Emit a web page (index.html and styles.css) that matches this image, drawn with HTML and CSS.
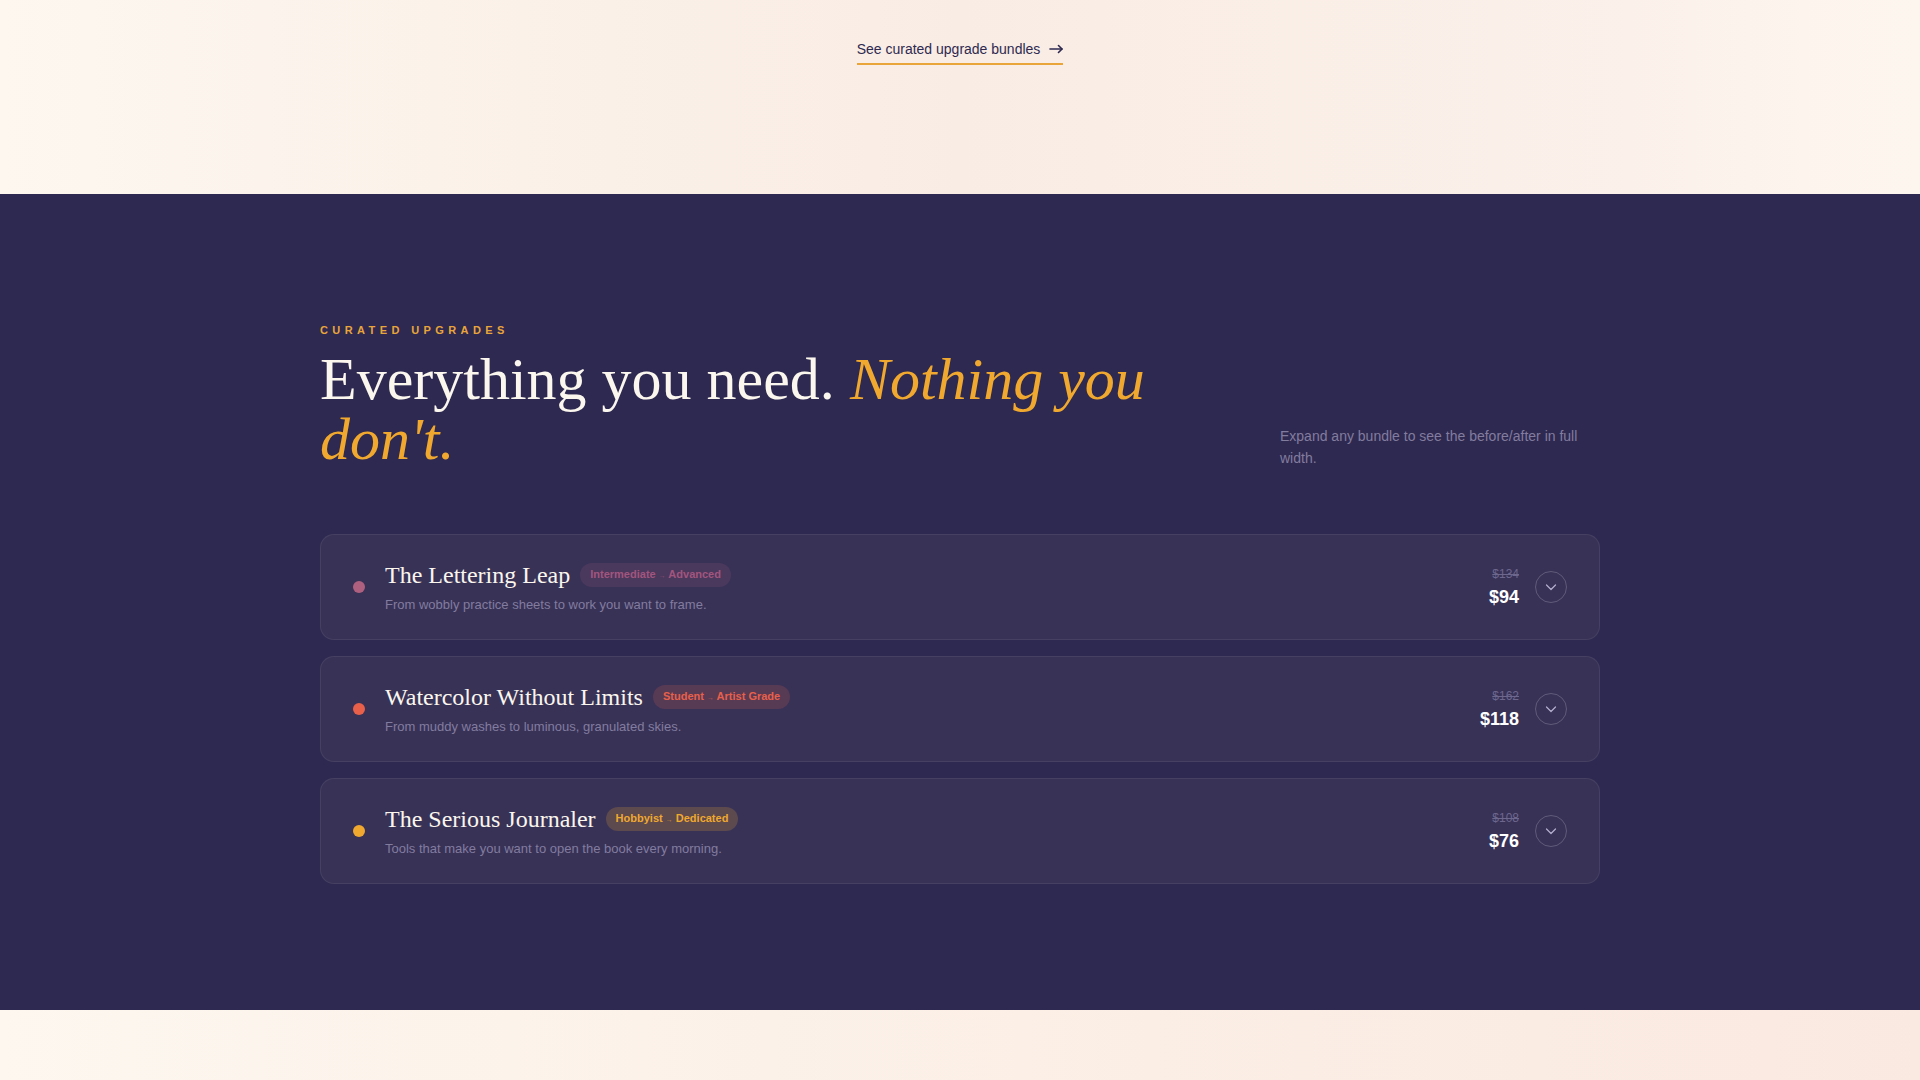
FILE: index.html
```html
<!DOCTYPE html>
<html lang="en">
<head>
    <meta charset="UTF-8">
    <meta name="viewport" content="width=device-width, initial-scale=1.0">
    <title>Curated Upgrades</title>
    <link rel="stylesheet" href="styles.css">
</head>
<body>
    <section class="hero-end">
        <a href="#bundles" class="bundle-link">
            <span>See curated upgrade bundles</span>
            <svg width="14" height="14" viewBox="0 0 14 14" fill="none" stroke="currentColor" stroke-width="1.6" stroke-linecap="round" stroke-linejoin="round">
                <path d="M1 7h12"/>
                <path d="M9.5 3.5L13 7l-3.5 3.5"/>
            </svg>
        </a>
    </section>

    <section class="bundles" id="bundles">
        <div class="container">
            <div class="bundles-head">
                <div class="head-left">
                    <p class="eyebrow">CURATED UPGRADES</p>
                    <h1>Everything you need. <em>Nothing you don't.</em></h1>
                </div>
                <p class="head-note">Expand any bundle to see the before/after in full width.</p>
            </div>

            <div class="bundle-list">
                <div class="bundle rose">
                    <span class="dot"></span>
                    <div class="bundle-info">
                        <div class="bundle-title">
                            <h3>The Lettering Leap</h3>
                            <span class="badge">Intermediate <span class="arrow">→</span> Advanced</span>
                        </div>
                        <p>From wobbly practice sheets to work you want to frame.</p>
                    </div>
                    <div class="price">
                        <span class="old">$134</span>
                        <span class="new">$94</span>
                    </div>
                    <button class="toggle" aria-label="Expand">
                        <svg width="12" height="12" viewBox="0 0 12 12" fill="none" stroke="currentColor" stroke-width="1.2" stroke-linecap="round" stroke-linejoin="round"><path d="M1.5 4l4.5 4.5L10.5 4"/></svg>
                    </button>
                </div>

                <div class="bundle coral">
                    <span class="dot"></span>
                    <div class="bundle-info">
                        <div class="bundle-title">
                            <h3>Watercolor Without Limits</h3>
                            <span class="badge">Student <span class="arrow">→</span> Artist Grade</span>
                        </div>
                        <p>From muddy washes to luminous, granulated skies.</p>
                    </div>
                    <div class="price">
                        <span class="old">$162</span>
                        <span class="new">$118</span>
                    </div>
                    <button class="toggle" aria-label="Expand">
                        <svg width="12" height="12" viewBox="0 0 12 12" fill="none" stroke="currentColor" stroke-width="1.2" stroke-linecap="round" stroke-linejoin="round"><path d="M1.5 4l4.5 4.5L10.5 4"/></svg>
                    </button>
                </div>

                <div class="bundle amber">
                    <span class="dot"></span>
                    <div class="bundle-info">
                        <div class="bundle-title">
                            <h3>The Serious Journaler</h3>
                            <span class="badge">Hobbyist <span class="arrow">→</span> Dedicated</span>
                        </div>
                        <p>Tools that make you want to open the book every morning.</p>
                    </div>
                    <div class="price">
                        <span class="old">$108</span>
                        <span class="new">$76</span>
                    </div>
                    <button class="toggle" aria-label="Expand">
                        <svg width="12" height="12" viewBox="0 0 12 12" fill="none" stroke="currentColor" stroke-width="1.2" stroke-linecap="round" stroke-linejoin="round"><path d="M1.5 4l4.5 4.5L10.5 4"/></svg>
                    </button>
                </div>
            </div>
        </div>
    </section>

    <section class="after"></section>
</body>
</html>
```

FILE: styles.css
```css
body {
    font-family: "Liberation Sans", Arial, sans-serif;
    margin: 0;
    padding: 0;
    background-color: #fcf3eb;
}

.hero-end {
    height: 194px;
    box-sizing: border-box;
    padding-top: 39px;
    display: flex;
    justify-content: center;
    align-items: flex-start;
    background: linear-gradient(90deg, #fdf7ef 0%, #f9ece4 50%, #fbf1ea 85%, #fdf6ef 100%);
}

.bundle-link {
    display: flex;
    align-items: center;
    gap: 9px;
    color: #2e2950;
    text-decoration: none;
    font-size: 14px;
    line-height: 20px;
    padding-bottom: 4px;
    border-bottom: 2px solid #e9a53a;
}

.bundles {
    background-color: #2e2950;
    padding: 128px 0 126px;
}

.container {
    width: 1280px;
    margin: 0 auto;
}

.bundles-head {
    display: flex;
    justify-content: space-between;
    align-items: flex-end;
    margin-bottom: 65px;
}

.head-left {
    max-width: 900px;
}

.eyebrow {
    margin: 0 0 11px;
    color: #e9a53a;
    font-size: 11px;
    line-height: 16px;
    font-weight: bold;
    letter-spacing: 4.4px;
}

h1 {
    margin: 0;
    font-family: "Liberation Serif", "Times New Roman", serif;
    font-weight: normal;
    font-size: 60px;
    line-height: 60px;
    color: #fbf6ee;
}

h1 em {
    color: #f0a82e;
}

.head-note {
    width: 320px;
    margin: 0;
    font-size: 14px;
    line-height: 22px;
    color: #827c9f;
}

.bundle-list {
    display: flex;
    flex-direction: column;
    gap: 16px;
}

.bundle {
    display: flex;
    align-items: center;
    padding: 24px 32px;
    background-color: #383257;
    border: 1px solid rgba(255, 255, 255, 0.07);
    border-radius: 14px;
}

.dot {
    width: 12px;
    height: 12px;
    border-radius: 50%;
    margin-right: 20px;
    flex-shrink: 0;
}

.bundle-info {
    flex: 1;
}

.bundle-title {
    display: flex;
    align-items: center;
    gap: 10px;
    margin-bottom: 4px;
}

.bundle-title h3 {
    margin: 0;
    font-family: "Liberation Serif", "Times New Roman", serif;
    font-weight: normal;
    font-size: 24px;
    line-height: 32px;
    color: #fbf6ee;
}

.badge {
    font-size: 11px;
    font-weight: bold;
    line-height: 14px;
    padding: 4px 10px;
    border-radius: 999px;
}

.badge .arrow {
    font-size: 7px;
    opacity: 0.7;
}

.bundle-info p {
    margin: 0;
    font-size: 13px;
    line-height: 20px;
    color: #827c9f;
}

.price {
    display: flex;
    flex-direction: column;
    align-items: flex-end;
    gap: 4px;
    margin-right: 16px;
}

.price .old {
    font-size: 12px;
    line-height: 16px;
    color: #6d678e;
    text-decoration: line-through;
}

.price .new {
    font-size: 18px;
    line-height: 22px;
    font-weight: bold;
    color: #ffffff;
}

.toggle {
    width: 32px;
    height: 32px;
    border-radius: 50%;
    border: 1px solid rgba(255, 255, 255, 0.2);
    background: none;
    color: #b6b0cf;
    display: flex;
    align-items: center;
    justify-content: center;
    padding: 0;
    cursor: pointer;
}

.rose .dot { background-color: #b0607f; }
.rose .badge { color: #a2557d; background-color: rgba(176, 96, 127, 0.16); }

.coral .dot { background-color: #e8604a; }
.coral .badge { color: #e8604a; background-color: rgba(232, 96, 74, 0.18); }

.amber .dot { background-color: #f0a82e; }
.amber .badge { color: #f0a82e; background-color: rgba(240, 168, 46, 0.2); }

.after {
    height: 300px;
    background: linear-gradient(90deg, #fdf7ef 0%, #fbeee5 60%, #fae9e1 100%);
}
```
